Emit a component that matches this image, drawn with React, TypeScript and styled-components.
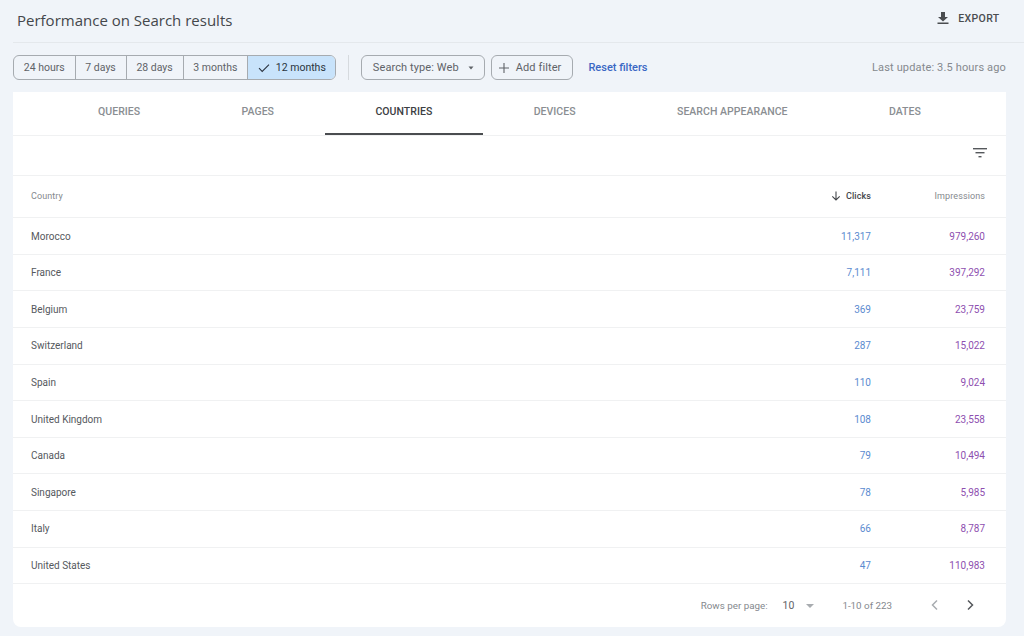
import React from 'react';
import styled, { createGlobalStyle } from 'styled-components';

const rows = [
  ['Morocco', '11,317', '979,260'],
  ['France', '7,111', '397,292'],
  ['Belgium', '369', '23,759'],
  ['Switzerland', '287', '15,022'],
  ['Spain', '110', '9,024'],
  ['United Kingdom', '108', '23,558'],
  ['Canada', '79', '10,494'],
  ['Singapore', '78', '5,985'],
  ['Italy', '66', '8,787'],
  ['United States', '47', '110,983'],
];

const ranges = ['24 hours', '7 days', '28 days', '3 months', '12 months'];
const tabs = ['QUERIES', 'PAGES', 'COUNTRIES', 'DEVICES', 'SEARCH APPEARANCE', 'DATES'];

const GlobalStyle = createGlobalStyle`
  html, body {
    margin: 0;
    background: #f0f4f9;
    font-family: Roboto, "Liberation Sans", sans-serif;
    overflow: hidden;
  }
`;

const Page = styled.div`
  width: 1024px;
  height: 636px;
  background: #f0f4f9;
  overflow: hidden;
`;

const Header = styled.header`
  height: 42px;
  box-sizing: content-box;
  border-bottom: 1px solid #e4e8ec;
  display: flex;
  align-items: center;
  justify-content: space-between;
  margin-left: 13px;
  padding: 0 24.5px 0 4px;
`;

const Title = styled.h1`
  margin: 0 0 3px;
  font-family: "Open Sans", sans-serif;
  font-size: 15px;
  font-weight: 400;
  color: #44474b;
`;

const ExportButton = styled.div`
  display: flex;
  align-items: center;
  gap: 8px;
  font-size: 10.5px;
  font-weight: 500;
  letter-spacing: 0.35px;
  color: #4a4d50;
  margin-bottom: 6px;
`;

const FilterBar = styled.div`
  height: 25px;
  margin: 12px 18px 12px 13px;
  display: flex;
  align-items: center;
`;

const Segments = styled.div`
  display: flex;
  height: 25px;
  border: 1px solid #a6abb0;
  border-radius: 6px;
  overflow: hidden;
  box-sizing: border-box;
`;

const Segment = styled.div<{ $active?: boolean }>`
  display: flex;
  align-items: center;
  gap: 5.5px;
  padding: ${(p) => (p.$active ? '0 9px 0 10px' : '0 9.8px')};
  font-size: 10.5px;
  color: ${(p) => (p.$active ? '#2a3540' : '#5f6368')};
  background: ${(p) => (p.$active ? '#c8e3fb' : 'transparent')};
  & + & {
    border-left: 1px solid #a6abb0;
  }
`;

const Divider = styled.div`
  width: 1px;
  height: 25px;
  background: #d6dade;
  margin: 0 12px;
`;

const Chip = styled.div<{ $spaced?: boolean }>`
  display: flex;
  align-items: center;
  height: 25px;
  box-sizing: border-box;
  border: 1px solid #a6abb0;
  border-radius: 6px;
  font-size: 11px;
  letter-spacing: 0.1px;
  color: #5f6368;
  padding: ${(p) => (p.$spaced ? '0 11px 0 6px' : '0 7px 0 11px')};
  margin-left: ${(p) => (p.$spaced ? '6px' : '0')};
  gap: 6px;
`;

const ResetLink = styled.div`
  font-size: 11px;
  font-weight: 500;
  color: #3a67c4;
  margin-left: 15px;
`;

const LastUpdate = styled.div`
  margin-left: auto;
  font-size: 11px;
  letter-spacing: 0.15px;
  color: #85898e;
`;

const Card = styled.main`
  width: 993px;
  height: 535px;
  margin-left: 13px;
  background: #fff;
  border-radius: 0 0 8px 8px;
  overflow: hidden;
`;

const TabRow = styled.div`
  display: flex;
  height: 44px;
  padding-left: 34.3px;
  border-bottom: 1px solid #f0f1f2;
  box-sizing: border-box;
`;

const Tab = styled.div<{ $active?: boolean }>`
  display: flex;
  align-items: center;
  padding: 0 50.7px 4px;
  font-size: 10.5px;
  letter-spacing: 0.04px;
  font-weight: 500;
  color: ${(p) => (p.$active ? '#3c4043' : '#8a8e92')};
  box-shadow: ${(p) => (p.$active ? 'inset 0 -2px 0 #4a4d50' : 'none')};
`;

const ToolRow = styled.div`
  height: 40px;
  box-sizing: border-box;
  border-bottom: 1px solid #f0f1f2;
  display: flex;
  align-items: center;
  justify-content: flex-end;
  padding: 0 18px 6px 0;
`;

const TableRow = styled.div<{ $head?: boolean }>`
  display: grid;
  grid-template-columns: 1fr 113px 114px;
  align-items: center;
  height: ${(p) => (p.$head ? '42.3px' : '36.6px')};
  box-sizing: border-box;
  padding: ${(p) => (p.$head ? '0 21px 2px 18px' : '0 21px 0 18px')};
  border-bottom: 1px solid #f0f1f2;
`;

const HeadCell = styled.div<{ $sorted?: boolean; $right?: boolean }>`
  display: flex;
  align-items: center;
  justify-content: ${(p) => (p.$right ? 'flex-end' : 'flex-start')};
  gap: 5px;
  font-size: 9px;
  letter-spacing: 0.1px;
  font-weight: ${(p) => (p.$sorted ? 500 : 400)};
  color: ${(p) => (p.$sorted ? '#44474b' : '#85898e')};
`;

const NameCell = styled.div`
  font-size: 10px;
  color: #55595d;
`;

const ValueCell = styled.div<{ $color: string }>`
  font-size: 10px;
  text-align: right;
  color: ${(p) => p.$color};
`;

const Pager = styled.div`
  height: 43px;
  display: flex;
  align-items: center;
  justify-content: flex-end;
  font-size: 9.8px;
  color: #85898e;
`;

const PageSize = styled.span`
  color: #5f6368;
  font-size: 10.5px;
  margin-left: 15px;
`;

const Caret = styled.span`
  width: 0;
  height: 0;
  margin-left: 12px;
  border-left: 4.5px solid transparent;
  border-right: 4.5px solid transparent;
  border-top: 4.5px solid #a8acb0;
`;

const PageCount = styled.span`
  margin-left: 28px;
`;

const PageNav = styled.span`
  display: flex;
  gap: 27px;
  margin: 0 31px 1px 38px;
`;

const App = () => (
  <Page>
    <GlobalStyle />
    <Header>
      <Title>Performance on Search results</Title>
      <ExportButton>
        <svg width="14" height="14" viewBox="0 0 14 14" fill="#4a4d50">
          <path d="M5 1h4v5h3L7 10.6 2 6h3z" />
          <rect x="1.5" y="11.5" width="11" height="1.5" />
        </svg>
        EXPORT
      </ExportButton>
    </Header>
    <FilterBar>
      <Segments>
        {ranges.map((r, i) => (
          <Segment key={r} $active={i === 4}>
            {i === 4 && (
              <svg width="12" height="10" viewBox="0 0 12 10" fill="none" stroke="#2b3440" strokeWidth="1.1">
                <path d="M1 5.2l3.2 3.2L11 1.6" />
              </svg>
            )}
            {r}
          </Segment>
        ))}
      </Segments>
      <Divider />
      <Chip>
        Search type: Web
        <svg width="12" height="8" viewBox="0 0 12 8" fill="#5f6368">
          <path d="M3.5 2.5h5L6 5.5z" />
        </svg>
      </Chip>
      <Chip $spaced>
        <svg width="12" height="12" viewBox="0 0 12 12" stroke="#5f6368" strokeWidth="1.1">
          <path d="M6 1v10M1 6h10" />
        </svg>
        Add filter
      </Chip>
      <ResetLink>Reset filters</ResetLink>
      <LastUpdate>Last update: 3.5 hours ago</LastUpdate>
    </FilterBar>
    <Card>
      <TabRow>
        {tabs.map((t) => (
          <Tab key={t} $active={t === 'COUNTRIES'}>
            {t}
          </Tab>
        ))}
      </TabRow>
      <ToolRow>
        <svg width="16" height="12" viewBox="0 0 16 12" fill="#55585c">
          <rect x="1" y="1" width="14" height="1.4" />
          <rect x="3.5" y="5" width="9" height="1.4" />
          <rect x="6.5" y="9" width="3" height="1.4" />
        </svg>
      </ToolRow>
      <TableRow $head>
        <HeadCell>Country</HeadCell>
        <HeadCell $sorted $right>
          <svg width="10" height="10" viewBox="0 0 10 10" fill="none" stroke="#44474b" strokeWidth="1.1">
            <path d="M5 .5v8.5M1.3 5.4L5 9l3.7-3.6" />
          </svg>
          Clicks
        </HeadCell>
        <HeadCell $right>Impressions</HeadCell>
      </TableRow>
      {rows.map(([name, clicks, impressions]) => (
        <TableRow key={name}>
          <NameCell>{name}</NameCell>
          <ValueCell $color="#5b8bd0">{clicks}</ValueCell>
          <ValueCell $color="#8e4fb0">{impressions}</ValueCell>
        </TableRow>
      ))}
      <Pager>
        Rows per page:
        <PageSize>10</PageSize>
        <Caret />
        <PageCount>1-10 of 223</PageCount>
        <PageNav>
          <svg width="9" height="12" viewBox="0 0 9 12" fill="none" stroke="#a8acb0" strokeWidth="1.5">
            <path d="M7 1.5L2.5 6 7 10.5" />
          </svg>
          <svg width="9" height="12" viewBox="0 0 9 12" fill="none" stroke="#55585c" strokeWidth="1.5">
            <path d="M2 1.5L6.5 6 2 10.5" />
          </svg>
        </PageNav>
      </Pager>
    </Card>
  </Page>
);

export default App;
